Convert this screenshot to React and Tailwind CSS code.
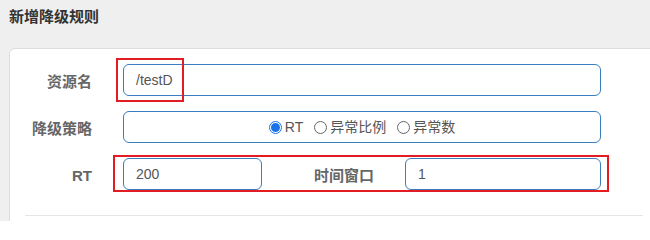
import React from 'react';

const font = { fontFamily: '"Liberation Sans", "Noto Sans CJK SC", sans-serif' };

function Label({ children, className = '' }) {
    return (
        <div className={`shrink-0 pt-[5px] text-right text-[15px] font-[700] text-[#666666] ${className}`}>{children}</div>
    );
}

function Field({ value, className = '' }) {
    return (
        <div className={`h-[32px] flex items-center px-[12px] border border-[#3a7ebf] rounded-[6px] bg-white text-[14px] text-[#555555] ${className}`}>
            {value}
        </div>
    );
}

function Radio({ checked, label }) {
    return (
        <label className="flex items-center gap-[3px]">
            {checked ? (
                <span className="w-[13px] h-[13px] rounded-full border border-[#1a73e8] flex items-center justify-center">
                    <span className="w-[9px] h-[9px] rounded-full bg-[#1a73e8]" />
                </span>
            ) : (
                <span className="w-[13px] h-[13px] rounded-full border border-[#666666] bg-white" />
            )}
            <span>{label}</span>
        </label>
    );
}

export default function App() {
    return (
        <div className="w-[650px] h-[221px] overflow-hidden bg-[#efefef]" style={font}>
            <div className="h-[48px] px-[9px] pt-[6px]">
                <h2 className="text-[15px] leading-[22px] font-[700] text-[#333333]">新增降级规则</h2>
            </div>

            <div className="ml-[9px] -mr-[20px] bg-white border border-[#dddddd] rounded-tl-[6px] pt-[15px] h-[200px]">
                <div className="space-y-[15px]">
                    <div className="relative flex items-center gap-[31px]">
                        <Label className="w-[82px]">资源名</Label>
                        <Field value="/testD" className="w-[478px]" />
                        <div className="absolute left-[106px] top-[-6px] w-[68px] h-[44px] border-2 border-[#e31b23]" />
                    </div>

                    <div className="flex items-center gap-[31px]">
                        <Label className="w-[82px]">降级策略</Label>
                        <div className="w-[478px] h-[32px] flex items-center justify-center gap-[11px] border border-[#3a7ebf] rounded-[6px] text-[14px] text-[#555555]">
                            <Radio checked label="RT" />
                            <Radio label="异常比例" />
                            <Radio label="异常数" />
                        </div>
                    </div>

                    <div className="relative flex items-center">
                        <Label className="w-[82px]">RT</Label>
                        <Field value="200" className="ml-[31px] w-[139px]" />
                        <Label className="w-[112px]">时间窗口</Label>
                        <Field value="1" className="ml-[31px] w-[196px]" />
                        <div className="absolute left-[103px] top-[-3px] w-[496px] h-[37px] border-2 border-[#e31b23]" />
                    </div>
                </div>

                <div className="mt-[25px] ml-[15px] w-[618px] border-t border-[#e5e5e5]" />
            </div>
        </div>
    );
}
